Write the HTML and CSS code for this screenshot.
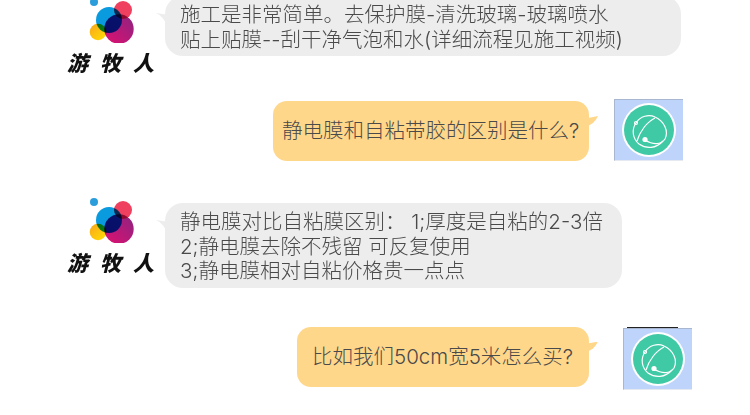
FILE: index.html
```html
<!DOCTYPE html>
<html lang="en">
<head>
    <meta charset="UTF-8">
    <meta name="viewport" content="width=device-width, initial-scale=1.0">
    <title>Chat</title>
    <link rel="stylesheet" href="styles.css">
</head>
<body>
    <svg class="defs" width="0" height="0" aria-hidden="true">
        <defs>
            <linearGradient id="magenta" x1="0" y1="1" x2="1" y2="0">
                <stop offset="0" stop-color="#e0106f"/>
                <stop offset="1" stop-color="#8a2482"/>
            </linearGradient>
            <linearGradient id="amber" x1="0" y1="0" x2="1" y2="1">
                <stop offset="0" stop-color="#f9a51f"/>
                <stop offset="1" stop-color="#ffe000"/>
            </linearGradient>
            <g id="logo-mark">
                <circle cx="29" cy="7" r="4" fill="#2b9ddb"/>
                <g class="blend">
                    <circle cx="44" cy="25" r="13" fill="#0a9ade"/>
                    <circle cx="58" cy="15" r="9" fill="#f0405f"/>
                    <circle cx="33" cy="37" r="8.300" fill="url(#amber)"/>
                    <circle cx="54" cy="34" r="14.700" fill="url(#magenta)"/>
                </g>
            </g>
            <g id="avatar-mark">
                <circle cx="27" cy="27" r="27" fill="#fff"/>
                <circle cx="27" cy="27" r="25" fill="#3fc9a5"/>
                <g fill="none" stroke="#fff" stroke-width="1.200">
                    <path d="M14 20C18 13 27 11 33 14C42 18 47 28 43 36C39 42 31 42 23 37"/>
                    <path d="M14 20C9 27 11 36 17 41C24 46 34 46 41 38"/>
                    <path d="M15 38C18 28 25 19 33 15"/>
                    <circle cx="14" cy="20" r="1.500"/>
                </g>
                <circle cx="23" cy="36.500" r="2.600" fill="#fff"/>
            </g>
        </defs>
    </svg>

    <div class="chat">
        <div class="row row-left row-first">
            <div class="brand">
                <svg class="brand-mark" width="90" height="48" viewBox="0 0 90 48"><use href="#logo-mark"/></svg>
                <div class="brand-name">游牧人</div>
            </div>
            <div class="bubble bubble-grey bubble-a">施工是非常简单。去保护膜-清洗玻璃-玻璃喷水<br>贴上贴膜--刮干净气泡和水(详细流程见施工视频)</div>
        </div>

        <div class="row row-right row-second">
            <div class="bubble bubble-orange bubble-b">静电膜和自粘带胶的区别是什么?</div>
            <div class="avatar"><svg width="54" height="54" viewBox="0 0 54 54"><use href="#avatar-mark"/></svg></div>
        </div>

        <div class="row row-left row-third">
            <div class="brand">
                <svg class="brand-mark" width="90" height="48" viewBox="0 0 90 48"><use href="#logo-mark"/></svg>
                <div class="brand-name">游牧人</div>
            </div>
            <div class="bubble bubble-grey bubble-c">静电膜对比自粘膜区别： 1;厚度是自粘的2-3倍<br>2;静电膜去除不残留 可反复使用<br>3;静电膜相对自粘价格贵一点点</div>
        </div>

        <div class="row row-right row-fourth">
            <div class="bubble bubble-orange bubble-d">比如我们50cm宽5米怎么买?</div>
            <div class="avatar avatar-lined"><svg width="54" height="54" viewBox="0 0 54 54"><use href="#avatar-mark"/></svg></div>
        </div>
    </div>
</body>
</html>
```

FILE: styles.css
```css
html, body { margin: 0; padding: 0; background: #fff; overflow: hidden; height: 415px; }
body { font-family: Inter, "Noto Sans CJK SC", sans-serif; font-weight: 300; color: #4a4a4a; }
.defs { position: absolute; }
.blend circle { mix-blend-mode: multiply; }

.chat { display: flex; flex-direction: column; }
.row { display: flex; align-items: flex-start; }
.row-left { padding-left: 65px; gap: 10px; }
.row-right { justify-content: flex-end; }
.row-first { margin-top: -5px; }
.row-second { margin-top: 24px; padding-right: 67px; gap: 25px; }
.row-third { margin-top: 34px; }
.row-fourth { margin-top: 39px; padding-right: 58px; gap: 34px; }

.brand { width: 90px; }
.brand-mark { display: block; }
.brand-name { font-family: "Noto Sans CJK SC", sans-serif; font-size: 21px; font-weight: 900; font-style: italic; line-height: 26px; letter-spacing: 12px; color: #111; margin-top: 6px; padding-left: 2px; white-space: nowrap; }

.bubble { position: relative; box-sizing: border-box; font-size: 20.500px; line-height: 24.500px; white-space: nowrap; }
.bubble-grey { background: #ededed; border-radius: 18px; padding: 7px 15px 4px; }
.bubble-orange { background: #ffd78b; border-radius: 14px; padding: 18px 9px; height: 60px; }
.bubble-grey::before { content: ""; position: absolute; left: -9px; top: 17px; width: 10px; height: 10px; background: #ededed; clip-path: polygon(0 0, 100% 15%, 100% 100%, 70% 55%, 35% 20%); }
.bubble-orange::after { content: ""; position: absolute; right: -9px; top: 15px; width: 10px; height: 10px; background: #ffd78b; clip-path: polygon(100% 0, 0 20%, 0 100%, 50% 70%, 80% 35%); }

.bubble-a { width: 516px; margin-top: 1px; }
.bubble-b { width: 316px; margin-top: 2px; }
.bubble-c { width: 457px; margin-top: 8px; }
.bubble-d { width: 292px; padding-left: 15px; }

.avatar { box-sizing: border-box; width: 69px; height: 62px; background: #bfd4fb; border-top: 1px solid #a9b6d0; border-left: 1px solid #a9b6d0; border-bottom: 1px solid #e6e9f0; display: flex; align-items: center; justify-content: center; }
.avatar svg { display: block; }
.avatar-lined { position: relative; margin-top: 1px; }
.avatar-lined::before { content: ""; position: absolute; left: 3px; top: -2px; width: 51px; height: 1px; background: #222; }
```
